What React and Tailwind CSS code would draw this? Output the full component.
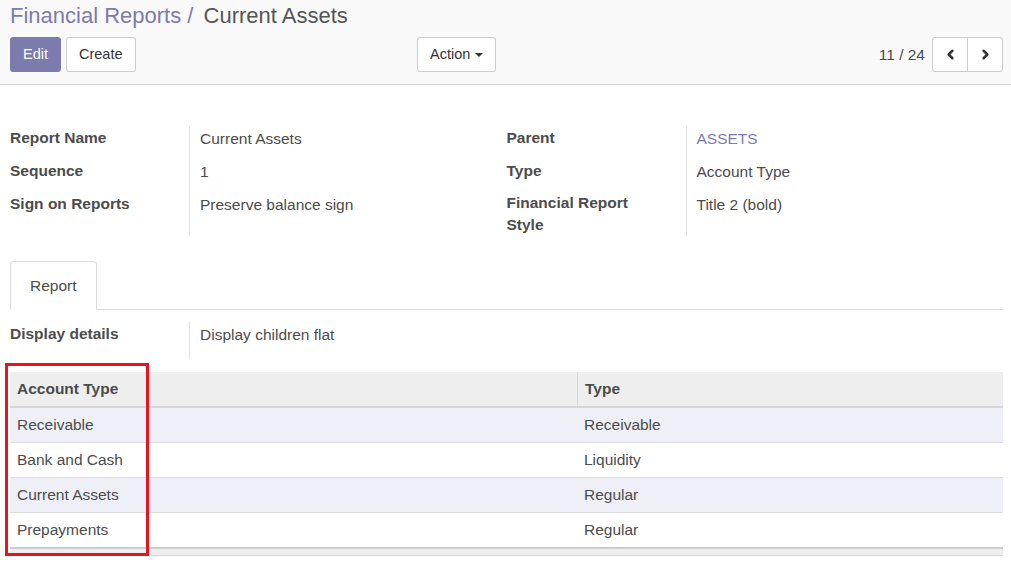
import React from 'react';
import { ChevronLeft, ChevronRight } from 'lucide-react';

const rows = [
  { name: 'Receivable', type: 'Receivable' },
  { name: 'Bank and Cash', type: 'Liquidity' },
  { name: 'Current Assets', type: 'Regular' },
  { name: 'Prepayments', type: 'Regular' },
];

export default function App() {
  return (
    <div className="min-h-[577px] bg-white text-[#4c4c4c] text-[15.5px] leading-[23px] font-['Liberation_Sans',Arial,sans-serif]">
      {/* Control panel */}
      <div className="bg-[#f9f9f9] border-b border-[#d4d4d4] pl-[10px] pr-[8px] pb-[12px]">
        <div className="h-[30px] pt-[1px] leading-[30px] text-[22px] whitespace-nowrap">
          <span className="text-[#7c7bad]">Financial Reports</span>
          <span className="text-[#7c7bad]"> / </span>
          <span className="ml-[4px] text-[#555]">Current Assets</span>
        </div>
        <div className="mt-[7px] flex items-center text-[14.5px]">
          <div className="flex w-[407px] gap-[5px]">
            <button className="h-[35px] px-[12px] rounded-[3px] border border-[#7c7bad] bg-[#7c7bad] text-white">Edit</button>
            <button className="h-[35px] px-[12px] rounded-[3px] border border-[#ccc] bg-white text-[#333]">Create</button>
          </div>
          <button className="h-[35px] px-[12px] rounded-[3px] border border-[#ccc] bg-white text-[#333] flex items-center gap-[5px]">
            Action
            <span className="w-0 h-0 border-l-[4px] border-r-[4px] border-t-[4px] border-l-transparent border-r-transparent border-t-[#333]" />
          </button>
          <div className="ml-auto flex items-center">
            <span className="text-[15.5px] text-[#4c4c4c] mr-[7px]">11 / 24</span>
            <div className="flex h-[35px] rounded-[3px] border border-[#ccc] bg-white">
              <button className="w-[35px] flex items-center justify-center border-r border-[#ccc] text-[#333]">
                <ChevronLeft size={15} strokeWidth={4} />
              </button>
              <button className="w-[34px] flex items-center justify-center text-[#333]">
                <ChevronRight size={15} strokeWidth={4} />
              </button>
            </div>
          </div>
        </div>
      </div>

      {/* Form sheet */}
      <div className="pl-[10px] pr-[8px] pt-[41px]">
        <div className="grid grid-cols-[179px_1fr_179px_1fr]">
          <div className="font-bold pb-[10px]">Report Name</div>
          <div className="border-l border-[#e2e2e2] pl-[10px] pt-[1px]">Current Assets</div>
          <div className="font-bold pb-[10px]">Parent</div>
          <div className="border-l border-[#e2e2e2] pl-[10px] pt-[1px] text-[#7c7bad]">ASSETS</div>

          <div className="font-bold pb-[10px]">Sequence</div>
          <div className="border-l border-[#e2e2e2] pl-[10px] pt-[1px]">1</div>
          <div className="font-bold pb-[10px]">Type</div>
          <div className="border-l border-[#e2e2e2] pl-[10px] pt-[1px]">Account Type</div>

          <div className="font-bold">Sign on Reports</div>
          <div className="border-l border-[#e2e2e2] pl-[10px] pt-[1px]">Preserve balance sign</div>
          <div className="font-bold leading-[22px] pr-[20px]">Financial Report Style</div>
          <div className="border-l border-[#e2e2e2] pl-[10px] pt-[1px]">Title 2 (bold)</div>
        </div>

        {/* Tabs */}
        <div className="mt-[25px] flex border-b border-[#ddd]">
          <div className="-mb-px px-[19px] py-[12px] border border-[#ddd] border-b-white rounded-t-[4px] bg-white">Report</div>
        </div>

        <div className="mt-[12px] grid grid-cols-[179px_1fr]">
          <div className="font-bold pb-[14px]">Display details</div>
          <div className="border-l border-[#e2e2e2] pl-[10px] pt-[1px]">Display children flat</div>
        </div>

        {/* One2many list */}
        <div className="relative mt-[13px]">
          <div className="grid grid-cols-[567px_1fr] bg-[#eeeeee] border-b-2 border-[#d6d6d6] font-bold">
            <div className="pl-[7px] pt-[5px] pb-[6px]">Account Type</div>
            <div className="pl-[7px] pt-[5px] pb-[6px] border-l border-[#dcdcdc]">Type</div>
          </div>
          {rows.map((r, i) => (
            <div
              key={r.name}
              className={`grid grid-cols-[567px_1fr] ${i % 2 === 0 ? 'bg-[#eeeff7]' : 'bg-white'} ${i < rows.length - 1 ? 'border-b border-[#dddddd]' : ''}`}
            >
              <div className="pl-[7px] pt-[5px] pb-[6px]">{r.name}</div>
              <div className="pl-[7px] pt-[5px] pb-[6px]">{r.type}</div>
            </div>
          ))}
          <div className="h-[9px] bg-[#eeeeee] border-t-2 border-b border-t-[#cccccc] border-b-[#d8d8d8]" />

          {/* highlight box */}
          <div className="absolute left-[-5px] top-[-9px] w-[144px] h-[193px] border-[3px] border-[#e8131e] pointer-events-none" />
        </div>
      </div>
    </div>
  );
}
